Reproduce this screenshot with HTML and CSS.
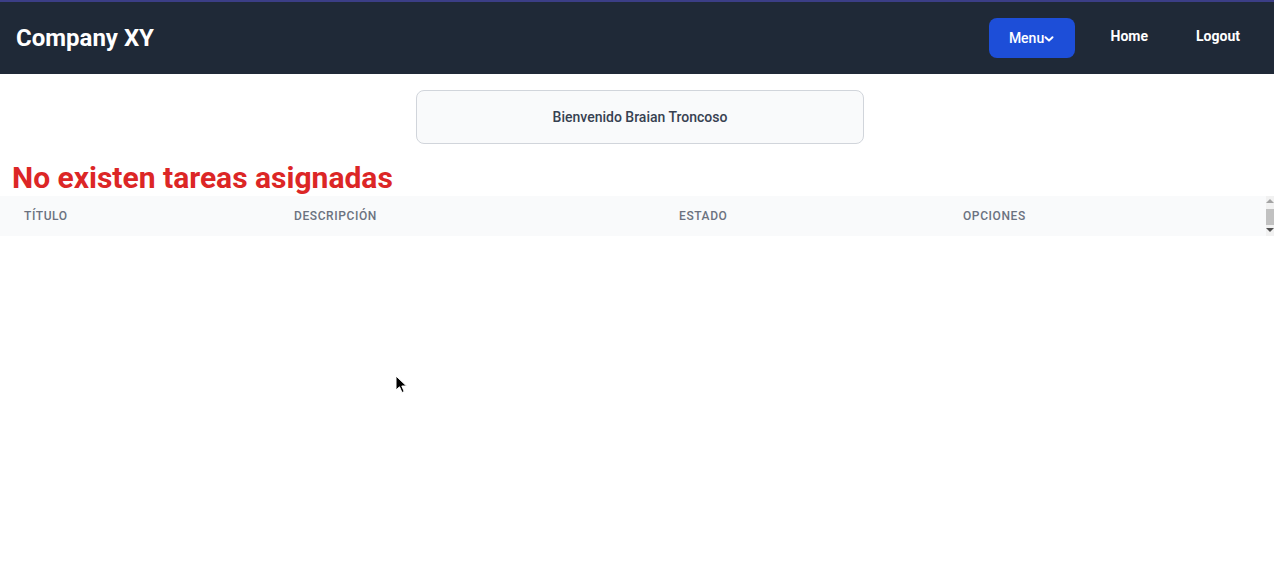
FILE: index.html
```html
<!DOCTYPE html>
<html lang="es">
<head>
<meta charset="utf-8">
<title>Company XY</title>
<link rel="stylesheet" href="styles.css">
</head>
<body>
<header class="navbar">
  <div class="brand">Company XY</div>
  <nav class="nav">
    <button class="menu-btn">Menu<svg class="chev" viewBox="0 0 10 10" width="10" height="10"><path d="M1.5 3.2 L5 6.6 L8.5 3.2" fill="none" stroke="#fff" stroke-width="2" stroke-linecap="round" stroke-linejoin="round"/></svg></button>
    <a class="nav-link" href="#">Home</a>
    <a class="nav-link" href="#">Logout</a>
  </nav>
</header>
<main class="main">
  <div class="welcome-wrap">
    <div class="welcome">Bienvenido Braian Troncoso</div>
  </div>
  <h1 class="empty">No existen tareas asignadas</h1>
  <div class="table-wrap">
    <table class="tasks">
      <thead>
        <tr>
          <th class="c1">Título</th>
          <th class="c2">Descripción</th>
          <th class="c3">Estado</th>
          <th class="c4">Opciones</th>
        </tr>
      </thead>
    </table>
    <div class="fake-scroll">
      <span class="arrow up"></span>
      <span class="thumb"></span>
      <span class="arrow down"></span>
    </div>
  </div>
</main>
<svg class="cursor" width="14" height="20" viewBox="0 0 14 20"><path d="M1 1 L1 15 L4.5 11.8 L7 17.5 L9.2 16.5 L6.8 11 L11.5 11 Z" fill="#000" stroke="#fff" stroke-width="1"/></svg>
</body>
</html>
```

FILE: styles.css
```css
* { box-sizing: border-box; }
html, body { margin: 0; padding: 0; background: #fff; }
body {
  font-family: Roboto, "Liberation Sans", Arial, sans-serif;
  color: #111827;
  position: relative;
  overflow: hidden;
  height: 561px;
}
.navbar {
  height: 74px;
  background: #1f2937;
  border-top: 2px solid #3b3e86;
  display: flex;
  align-items: center;
  justify-content: space-between;
  padding: 0 16px;
}
.brand {
  color: #fff;
  font-size: 24px;
  font-weight: 700;
}
.nav {
  display: flex;
  align-items: center;
  padding-right: 18px;
}
.menu-btn {
  background: #1d4ed8;
  color: #fff;
  border: 0;
  border-radius: 8px;
  height: 40px;
  width: 86px;
  font-family: inherit;
  font-size: 14px;
  font-weight: 500;
  display: flex;
  align-items: center;
  justify-content: center;
  padding: 0;
  margin-right: 36px;
}
.chev { margin-top: 1px; }
.nav-link {
  color: #fff;
  text-decoration: none;
  font-size: 14px;
  font-weight: 700;
  margin-bottom: 4px;
}
.nav-link + .nav-link { margin-left: 48px; }
.main { padding-top: 16px; }
.welcome-wrap { display: flex; justify-content: center; padding-left: 6px; }
.welcome {
  width: 448px;
  height: 54px;
  background: #f9fafb;
  border: 1px solid #d1d5db;
  border-radius: 8px;
  display: flex;
  align-items: center;
  justify-content: center;
  font-size: 14px;
  font-weight: 500;
  color: #374151;
}
.empty {
  margin: 16px 0 0 12px;
  font-size: 30px;
  line-height: 36px;
  font-weight: 700;
  color: #dc2626;
  height: 36px;
}
.table-wrap {
  position: relative;
  background: #f9fafb;
}
.tasks {
  border-collapse: collapse;
  width: 1266px;
  table-layout: fixed;
}
.tasks th {
  height: 40px;
  text-align: left;
  padding: 0 24px;
  font-size: 12px;
  font-weight: 500;
  letter-spacing: 0.05em;
  text-transform: uppercase;
  color: #6b7280;
  background: #f9fafb;
}
.c1 { width: 270px; }
.c2 { width: 385px; }
.c3 { width: 284px; }
.c4 { width: 327px; }
.fake-scroll {
  position: absolute;
  right: 0;
  top: 0;
  width: 8px;
  height: 40px;
  background: #f1f1f1;
  display: flex;
  flex-direction: column;
  align-items: center;
  padding-top: 3px;
}
.arrow { width: 0; height: 0; border-left: 4px solid transparent; border-right: 4px solid transparent; }
.arrow.up { border-bottom: 4px solid #a3a3a3; }
.arrow.down { border-top: 4px solid #505050; margin-top: 3px; }
.thumb { width: 8px; height: 16px; background: #c1c1c1; margin-top: 6px; }
.cursor { position: absolute; left: 395px; top: 375px; }
```
